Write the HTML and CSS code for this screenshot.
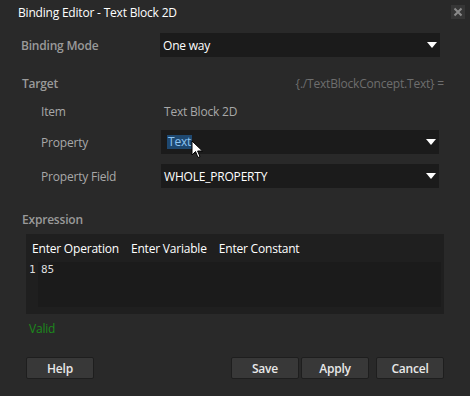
FILE: index.html
```html
<!DOCTYPE html>
<html lang="en">
<head>
    <meta charset="UTF-8">
    <title>Binding Editor - Text Block 2D</title>
    <link rel="stylesheet" href="styles.css">
</head>
<body>
    <div class="dialog">
        <header class="titlebar">
            <h1>Binding Editor - Text Block 2D</h1>
            <button class="close" aria-label="Close">
                <svg width="10" height="10" viewBox="0 0 10 10"><path d="M1.5 1.5L8.5 8.5M8.5 1.5L1.5 8.5" stroke="#8a8a8a" stroke-width="2"/></svg>
            </button>
        </header>

        <div class="row mode">
            <span class="label strong">Binding Mode</span>
            <div class="select"><span>One way</span><i class="arrow"></i></div>
        </div>

        <div class="section-head">
            <span class="label strong">Target</span>
            <span class="path">{./TextBlockConcept.Text} =</span>
        </div>

        <div class="row sub item">
            <span class="label">Item</span>
            <span class="value">Text Block 2D</span>
        </div>
        <div class="row sub">
            <span class="label">Property</span>
            <div class="select"><span class="selected">Text</span><i class="arrow"></i>
                <svg class="cursor" width="13" height="19" viewBox="0 0 13 19"><path d="M1 1V15L4.5 11.5L7 17.5L9 16.6L6.6 11H11.5Z" fill="#fff" stroke="#000" stroke-width="1"/></svg>
            </div>
        </div>
        <div class="row sub">
            <span class="label">Property Field</span>
            <div class="select"><span>WHOLE_PROPERTY</span><i class="arrow"></i></div>
        </div>

        <div class="section-head expr-head">
            <span class="label strong">Expression</span>
        </div>
        <div class="expr">
            <nav class="tabs">
                <a href="#">Enter Operation</a>
                <a href="#">Enter Variable</a>
                <a href="#">Enter Constant</a>
            </nav>
            <div class="editor">
                <span class="gutter">1</span>
                <div class="code">85</div>
            </div>
        </div>
        <div class="status">Valid</div>

        <footer class="buttons">
            <button class="btn">Help</button>
            <span class="spacer"></span>
            <button class="btn">Save</button>
            <button class="btn">Apply</button>
            <button class="btn cancel">Cancel</button>
        </footer>
    </div>
</body>
</html>
```
FILE: styles.css
```css
html, body {
    margin:0; padding:0;
    background:#292929;
}
body {
    font-family:"Open Sans", "Noto Sans", sans-serif;
    font-size:12px; color:#fff;
    letter-spacing:-0.2px;
}
.dialog {
    width:470px; height:396px;
    box-sizing:border-box;
}
.titlebar {
    display:flex; align-items:center;
    height:24px; padding:0 5px 0 18px;
}
.titlebar h1 {
    flex:1; margin:0;
    font-size:12px; font-weight:400;
}
.titlebar .close {
    width:14px; height:14px;
    padding:0; border:0;
    background:#363636;
    display:flex; align-items:center; justify-content:center;
}
.row {
    display:flex; align-items:center;
    height:24px;
}
.label {
    color:#a8a8a8;
}
.label.strong {
    font-weight:600; color:#9a9a9a;
}
.mode {
    margin-top:9px; padding-left:21px;
}
.mode .label {width:139px;}
.select {
    position:relative;
    width:280px; height:24px;
    box-sizing:border-box;
    background:#1b1b1b;
    display:flex; align-items:center;
    padding-left:3px;
}
.select .arrow {
    position:absolute; right:3px; top:9px;
    width:0; height:0;
    border-left:5px solid transparent;
    border-right:5px solid transparent;
    border-top:6px solid #fff;
}
.section-head {
    display:flex; justify-content:space-between; align-items:center;
    height:18px;
    margin-top:17px; padding:0 26px 0 22px;
}
.section-head .path {
    color:#6e6e6e;
}
.sub {
    padding-left:41px;
}
.sub .label {width:120px;}
.sub .select {width:278px;}
.item {margin-top:10px; height:18px; margin-bottom:7px;}
.item .label {width:123px;}
.item .value {color:#a8a8a8;}
.sub + .sub {margin-top:10px;}
.selected {
    background:#1e4870; color:#8cc3f0;
    padding:0 1px; margin-left:3px;
    line-height:14px;
}
.cursor {
    position:absolute; left:30px; top:10px;
}
.expr-head {margin-top:22px;}
.expr {
    margin:6px 26px 0 26px;
    height:80px;
    background:#1f1f1f;
    box-sizing:border-box;
    padding:0 3px 7px 3px;
    display:flex; flex-direction:column;
}
.tabs {
    display:flex; gap:12px;
    height:28px; align-items:center;
    padding-left:3px;
}
.tabs a {
    color:#fff; text-decoration:none;
}
.editor {
    flex:1;
    display:flex;
}
.gutter, .code {
    font-family:"DejaVu Sans Mono", monospace;
    font-size:11px; line-height:16px;
    letter-spacing:0;
}
.gutter {
    width:9px; color:#ddd;
}
.code {
    flex:1;
    background:#1b1b1b;
    padding-left:3px; color:#ddd;
}
.status {
    color:#1c8a1c;
    padding-left:29px; margin-top:7px;
    height:16px; line-height:16px;
}
.buttons {
    display:flex; align-items:center;
    margin-top:20px; padding:0 26px;
}
.spacer {flex:1;}
.btn {
    width:68px; height:22px;
    background:#383838;
    border:1px solid #1e1e1e; border-radius:2px;
    color:#e8e8e8; font-family:inherit;
    font-size:12px; font-weight:600;
    letter-spacing:-0.2px;
    padding:0;
}
.btn + .btn {margin-left:2px;}
.btn.cancel {margin-left:7px;}
```
